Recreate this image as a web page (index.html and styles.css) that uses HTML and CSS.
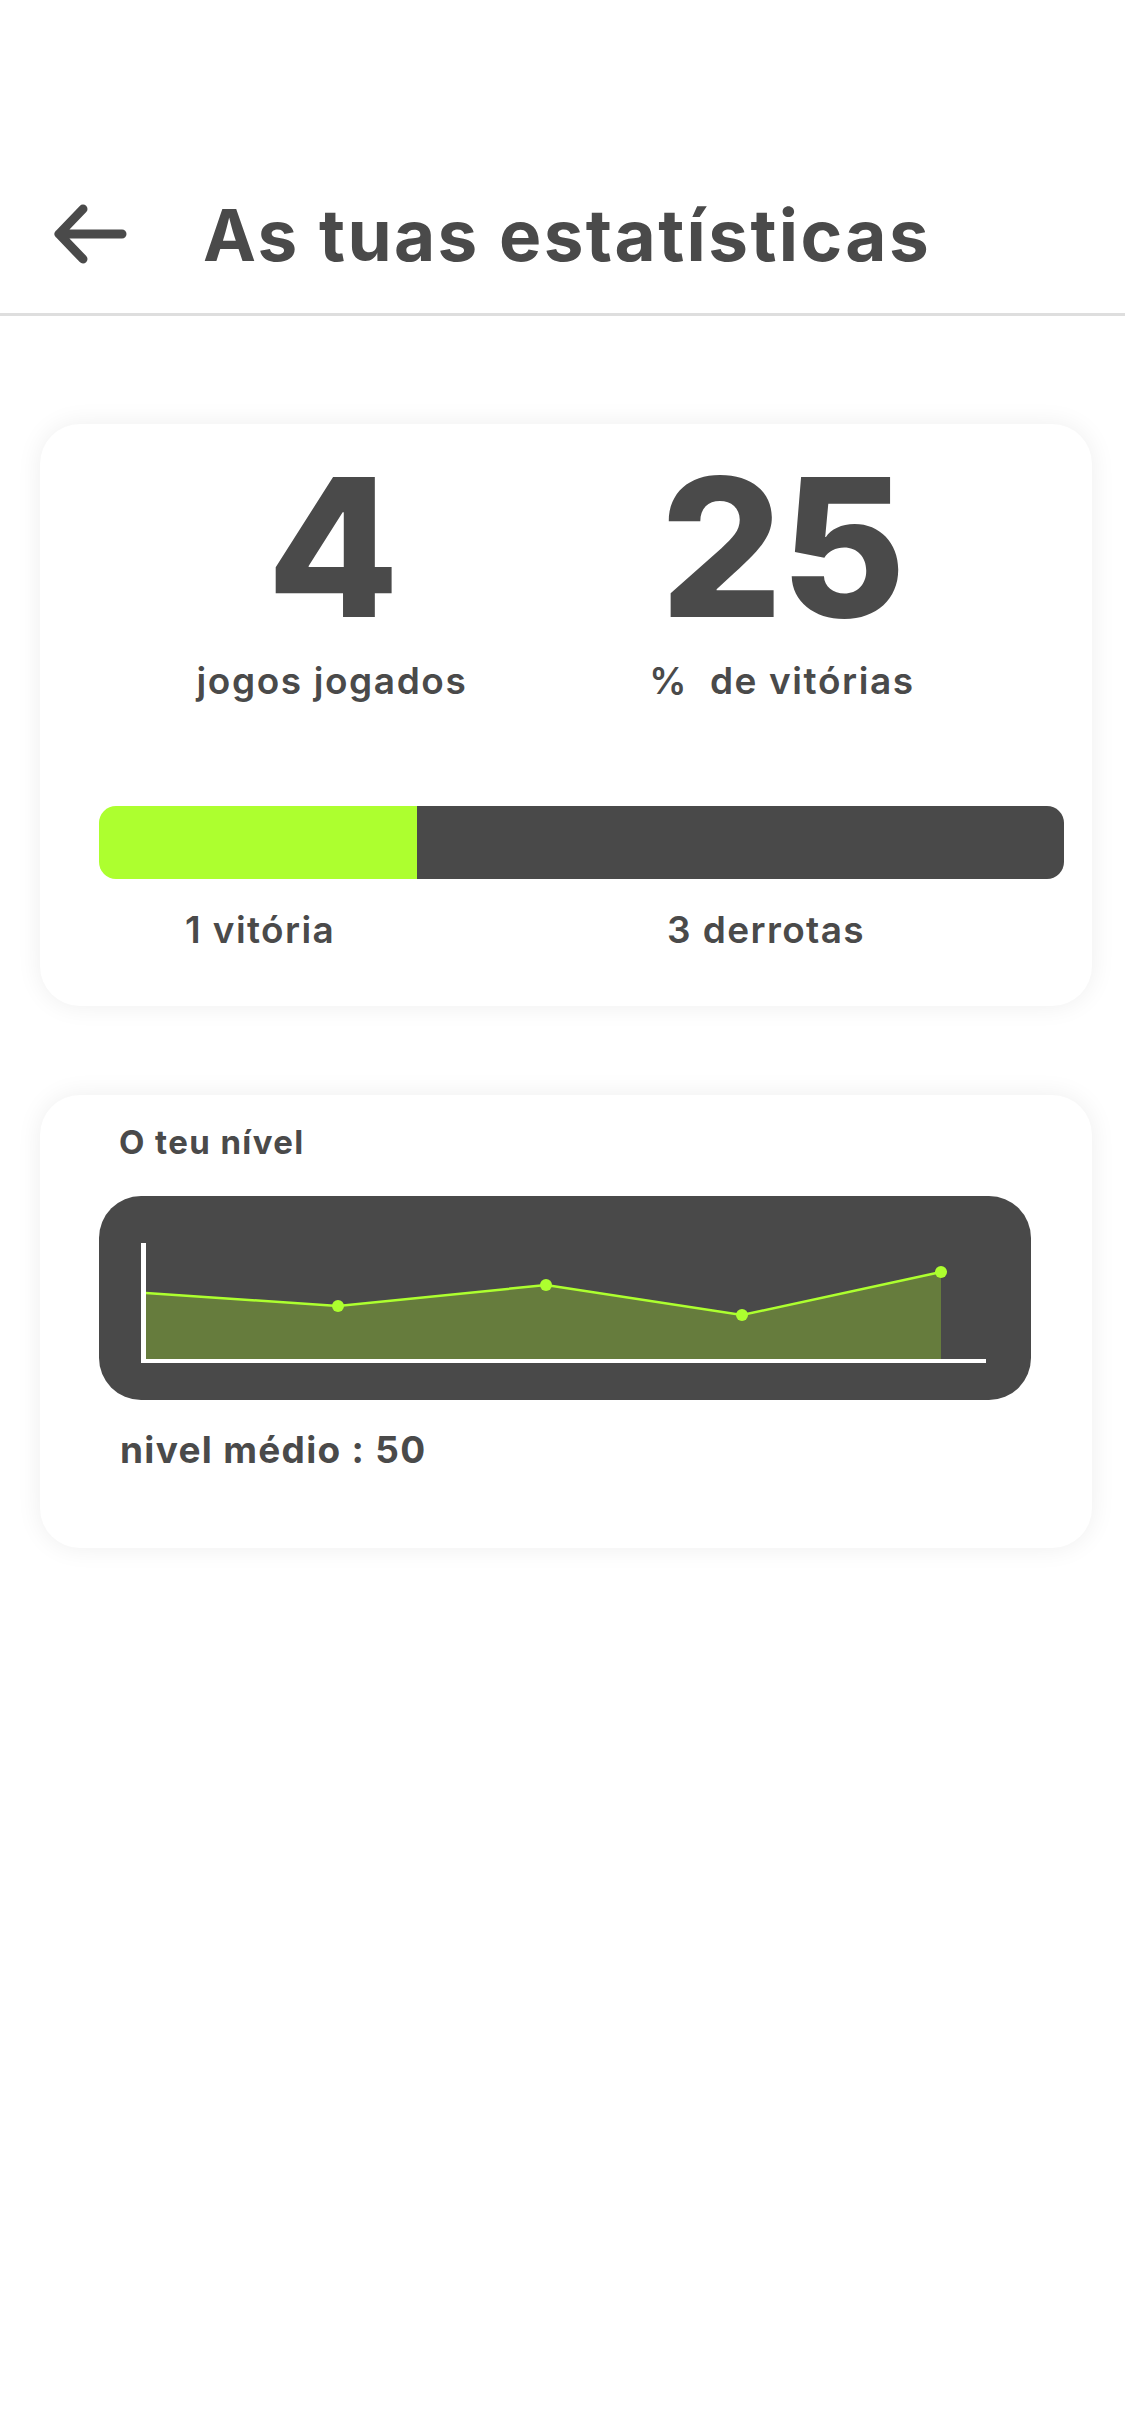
FILE: index.html
```html
<!DOCTYPE html>
<html lang="pt">
<head>
<meta charset="utf-8">
<title>As tuas estatísticas</title>
<link rel="stylesheet" href="styles.css">
</head>
<body>
<header class="topbar">
  <svg class="back" width="84" height="72" viewBox="0 0 84 72" aria-label="Voltar">
    <path d="M35 10 L11 35 L35 60 M11 35 L74 35" fill="none" stroke="#4a4a4a" stroke-width="9" stroke-linecap="round" stroke-linejoin="round"/>
  </svg>
  <h1 class="title">As tuas estatísticas</h1>
</header>
<main class="content">
  <section class="card card-games">
    <div class="stats">
      <div class="stat">
        <div class="stat-num">4</div>
        <div class="stat-label">jogos jogados</div>
      </div>
      <div class="stat">
        <div class="stat-num">25</div>
        <div class="stat-label">%&nbsp; de vitórias</div>
      </div>
    </div>
    <div class="bar">
      <div class="bar-win"></div>
      <div class="bar-loss"></div>
    </div>
    <div class="bar-labels">
      <span class="bar-label">1 vitória</span>
      <span class="bar-label">3 derrotas</span>
    </div>
  </section>
  <section class="card card-level">
    <h2 class="level-title">O teu nível</h2>
    <div class="chart">
      <svg width="932" height="204" viewBox="0 0 932 204">
        <polygon points="47,97 239,110 447,89 643,119 842,76 842,163 47,163" fill="#667c3d"/>
        <polyline points="47,97 239,110 447,89 643,119 842,76" fill="none" stroke="#adff2f" stroke-width="2.5"/>
        <circle cx="239" cy="110" r="6" fill="#adff2f"/>
        <circle cx="447" cy="89" r="6" fill="#adff2f"/>
        <circle cx="643" cy="119" r="6" fill="#adff2f"/>
        <circle cx="842" cy="76" r="6" fill="#adff2f"/>
        <rect x="42" y="47" width="5" height="120" fill="#ffffff"/>
        <rect x="42" y="163" width="845" height="4" fill="#ffffff"/>
      </svg>
    </div>
    <p class="level-avg">nivel médio : 50</p>
  </section>
</main>
</body>
</html>
```

FILE: styles.css
```css
* { box-sizing: border-box; }
html, body { margin: 0; padding: 0; background: #ffffff; }
body {
  font-family: Inter, "Noto Sans", "Liberation Sans", sans-serif;
  color: #4a4a4a;
  width: 1125px;
  min-height: 2436px;
}
.topbar {
  display: flex;
  align-items: center;
  padding: 185px 0 28px 48px;
  border-bottom: 3px solid #dedede;
}
.back { display: block; flex: none; }
.title {
  margin: 0 0 0 71px;
  font-size: 71px;
  line-height: 100px;
  font-weight: 700;
  letter-spacing: 2.4px;
  color: #4a4a4a;
}
.content {
  padding: 108px 33px 0 40px;
  display: flex;
  flex-direction: column;
  gap: 89px;
}
.card {
  background: #ffffff;
  border-radius: 40px;
  box-shadow: 0 0 26px rgba(0,0,0,0.07);
}
.card-games { padding: 10px 28px 54px 59px; }
.stats {
  display: grid;
  grid-template-columns: 448px 452px;
  margin-left: 9px;
}
.stat { text-align: center; }
.stat-num {
  font-size: 192px;
  line-height: 226px;
  font-weight: 800;
  letter-spacing: -2px;
}
.stat-label {
  margin-top: 2px;
  font-size: 37px;
  line-height: 37px;
  font-weight: 600;
  letter-spacing: 1.6px;
}
.bar {
  margin-top: 107px;
  height: 73px;
  display: flex;
  border-radius: 17px;
  overflow: hidden;
}
.bar-win { width: 318px; background: #adff2f; }
.bar-loss { flex: 1; background: #494949; }
.bar-labels {
  margin-top: 29px;
  padding-left: 86px;
  display: grid;
  grid-template-columns: 482px 1fr;
}
.bar-label {
  font-size: 37px;
  line-height: 44px;
  font-weight: 600;
  letter-spacing: 1.4px;
}
.card-level { padding: 27px 61px 76px 59px; }
.level-title {
  margin: 0 0 34px 20px;
  font-size: 33px;
  line-height: 40px;
  font-weight: 700;
  letter-spacing: 1.4px;
}
.chart {
  width: 932px;
  height: 204px;
  background: #494949;
  border-radius: 42px;
  overflow: hidden;
}
.chart svg { display: block; }
.level-avg {
  margin: 28px 0 0 21px;
  font-size: 37px;
  line-height: 44px;
  font-weight: 700;
  letter-spacing: 1.3px;
}
```
